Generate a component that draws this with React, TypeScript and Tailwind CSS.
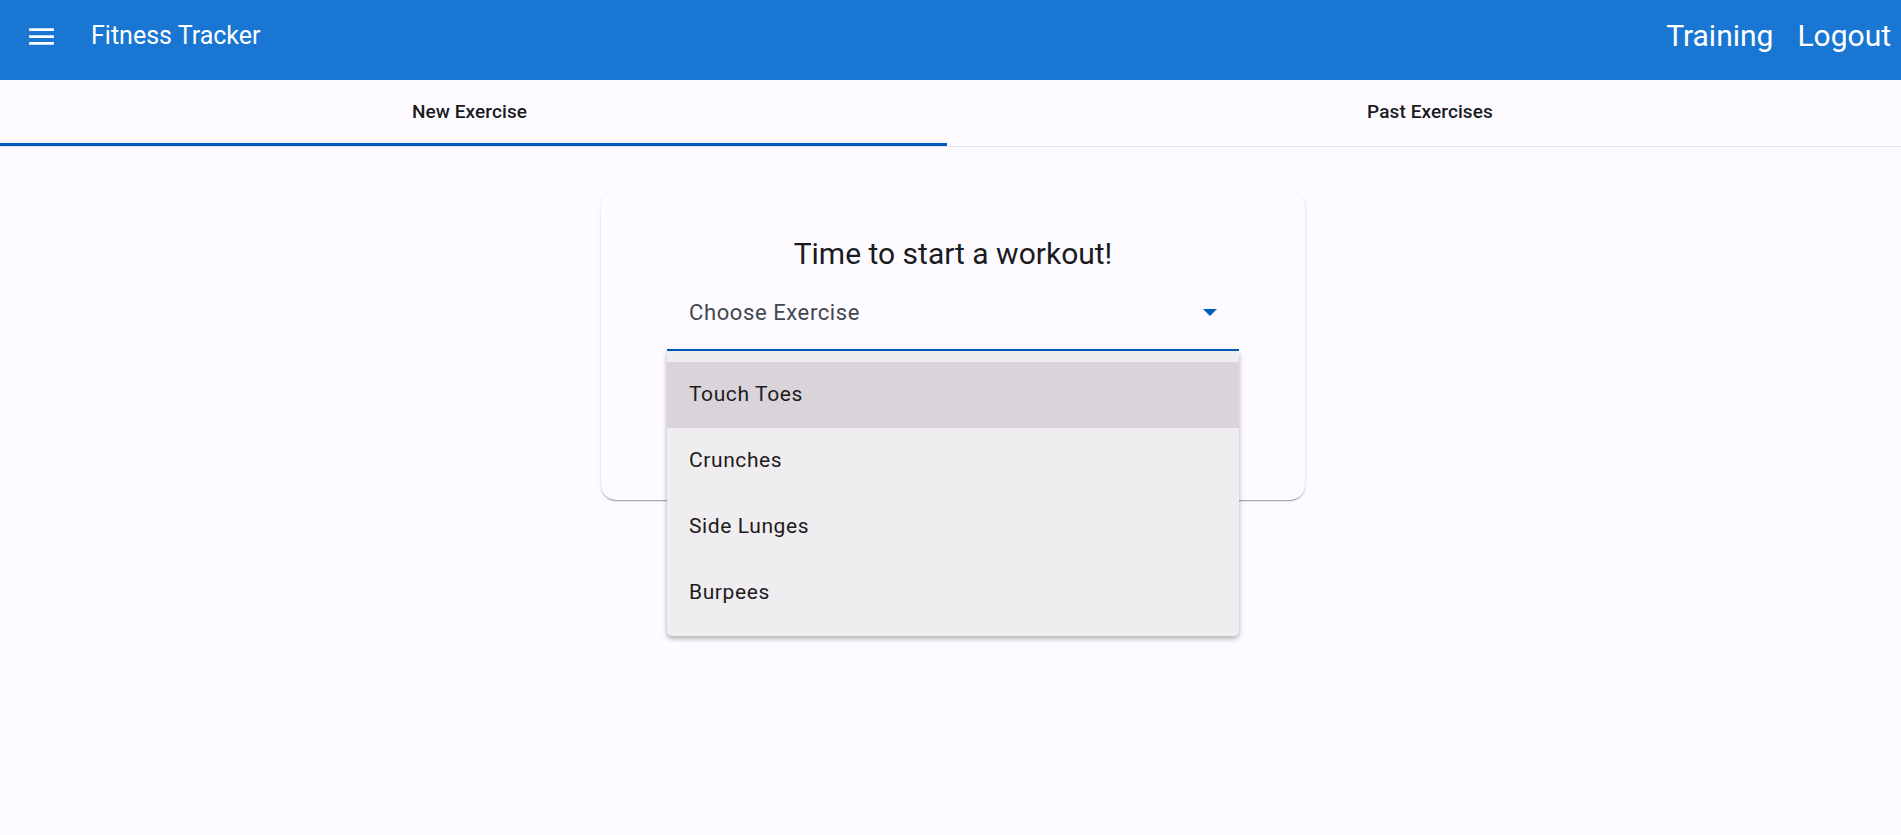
import React from "react";

const items = ["Touch Toes", "Crunches", "Side Lunges", "Burpees"];

export default function App() {
  return (
    <div
      className="min-h-[835px] w-full bg-[#fdfbff] text-[#1a1b1f]"
      style={{ fontFamily: "Roboto, 'Noto Sans', sans-serif" }}
    >
      {/* Toolbar */}
      <header className="flex h-[80px] items-center bg-[#1976d2] pb-[8px] pl-[25px] pr-[10px] text-white">
        <svg width="33" height="33" viewBox="0 0 24 24" fill="currentColor" aria-hidden="true">
          <path d="M3 18h18v-2H3v2zm0-5h18v-2H3v2zm0-7v2h18V6H3z" />
        </svg>
        <span className="ml-[33px] text-[25px] leading-[30px] tracking-[0px]">Fitness Tracker</span>
        <div className="ml-auto flex items-center gap-[24px] text-[30px] leading-[36px]">
          <span>Training</span>
          <span>Logout</span>
        </div>
      </header>

      {/* Tabs */}
      <div className="flex h-[67px] border-b border-[#e0e2ec]">
        <div className="flex w-[947px] flex-col">
          <div className="flex flex-1 items-center justify-center pr-[8px] pt-[2px] text-[19px] font-medium tracking-[0.1px] text-[#1a1b1f]">
            New Exercise
          </div>
          <div className="h-[3px] bg-[#005cbb]" />
        </div>
        <div className="flex flex-1 flex-col">
          <div className="flex flex-1 items-center justify-center pl-[12px] pt-[2px] text-[19px] font-medium tracking-[0.1px] text-[#1a1b1f]">
            Past Exercises
          </div>
          <div className="h-[3px]" />
        </div>
      </div>

      {/* Content */}
      <div className="flex justify-center pl-[5px] pt-[44px]">
        <div className="h-[309px] w-[704px] rounded-[15px] bg-[#fdfbff] px-[66px] pt-[45px] shadow-[0_2px_1px_-1px_rgba(0,0,0,0.2),0_1px_1px_0_rgba(0,0,0,0.14),0_1px_3px_0_rgba(0,0,0,0.12)]">
          <h1 className="text-center text-[30px] leading-[36px] text-[#1a1b1f]">
            Time to start a workout!
          </h1>
          <div className="relative mt-[9px]">
            <div className="flex h-[70px] items-center border-b-2 border-[#005cbb] pb-[5px] pl-[22px] pr-[22px]">
              <span className="text-[22px] tracking-[0.6px] text-[#44474e]">Choose Exercise</span>
              <svg className="ml-auto" width="14" height="7" viewBox="0 0 14 7" aria-hidden="true">
                <path d="M0 0h14L7 7z" fill="#005cbb" />
              </svg>
            </div>
            {/* Dropdown panel */}
            <div className="absolute left-0 top-full z-10 w-full rounded-b-[5px] bg-[#efedf0] pb-[10px] pt-[11px] shadow-[0_3px_4px_rgba(0,0,0,0.22),0_1px_8px_rgba(0,0,0,0.1)]">
              {items.map((it, i) => (
                <div
                  key={it}
                  className={
                    "flex h-[66px] items-center pl-[22px] text-[21px] tracking-[0.6px] text-[#1d1b20] " +
                    (i === 0 ? "bg-[#d8d4d9]" : "")
                  }
                >
                  {it}
                </div>
              ))}
            </div>
          </div>
        </div>
      </div>
    </div>
  );
}
